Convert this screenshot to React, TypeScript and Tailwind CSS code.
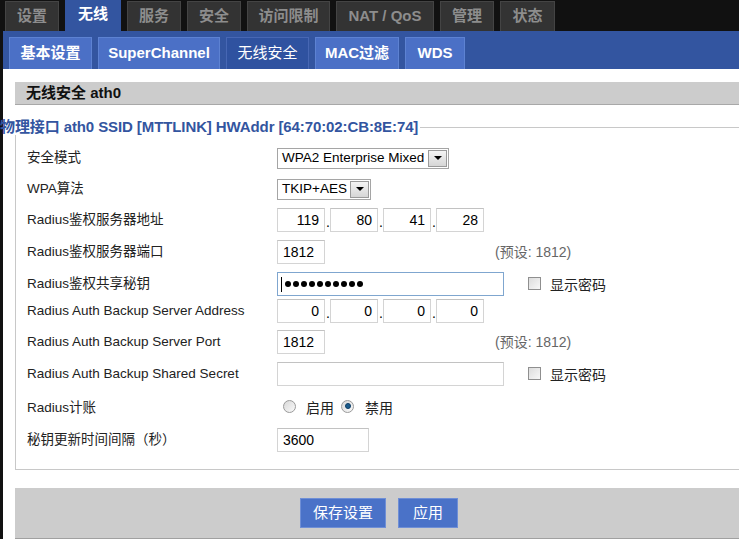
import React from "react";

const font = "font-['Liberation_Sans','Noto_Sans_CJK_SC',sans-serif]";

const topTabs = [
    { label: "设置", w: "w-[54px]" },
    { label: "无线", w: "w-[56px]", active: true },
    { label: "服务", w: "w-[54px]" },
    { label: "安全", w: "w-[54px]" },
    { label: "访问限制", w: "w-[83px]" },
    { label: "NAT / QoS", w: "w-[98px]" },
    { label: "管理", w: "w-[54px]" },
    { label: "状态", w: "w-[55px]" },
];

const subTabs = [
    { label: "基本设置", w: "w-[83px]" },
    { label: "SuperChannel", w: "w-[122px]" },
    { label: "无线安全", w: "w-[83px]", active: true },
    { label: "MAC过滤", w: "w-[84px]" },
    { label: "WDS", w: "w-[60px]" },
];

const Select = ({ value, w }: { value: string; w: string }) => (
    <div className={`${w} h-[21px] border border-[#a5a5a5] bg-white flex items-center justify-between pl-[4px] pr-[1px]`}>
        <span className="text-[13.5px] text-black leading-none whitespace-nowrap">{value}</span>
        <span className="shrink-0 w-[19px] h-[17px] border border-[#9a9a9a] bg-gradient-to-b from-[#f4f4f4] to-[#d6d6d6] flex items-center justify-center">
            <span className="w-0 h-0 border-l-[4px] border-r-[4px] border-t-[4px] border-l-transparent border-r-transparent border-t-black" />
        </span>
    </div>
);

const Input = ({ value = "", w = "w-[48px]", right = false }: { value?: string; w?: string; right?: boolean }) => (
    <div className={`${w} h-[24px] border border-[#d4d4d4] border-t-[#c2c2c2] bg-white flex items-center px-[5px] text-[14px] text-black ${right ? "justify-end" : ""}`}>
        {value}
    </div>
);

const IpInput = ({ parts }: { parts: string[] }) => (
    <div className="flex items-end">
        {parts.map((p, i) => (
            <React.Fragment key={i}>
                <Input value={p} right />
                {i < parts.length - 1 && <span className="w-[5px] text-[14px] leading-none pb-[3px] pl-[1px]">.</span>}
            </React.Fragment>
        ))}
    </div>
);

const Checkbox = () => (
    <span className="inline-block w-[13px] h-[13px] border border-[#8f8f8f] bg-gradient-to-br from-[#dcdcdc] to-[#f8f8f8]" />
);

const Radio = ({ checked }: { checked?: boolean }) => (
    <span className="inline-flex w-[13px] h-[13px] rounded-full border border-[#9a9a9a] bg-gradient-to-br from-[#d8d8d8] to-[#fafafa] items-center justify-center">
        {checked && <span className="w-[6px] h-[6px] rounded-full bg-[#1c5c8c] border border-[#0d3d66]" />}
    </span>
);

const Row = ({ label, h, children }: { label: string; h: string; children: React.ReactNode }) => (
    <div className={`flex items-center ${h}`}>
        <div className="w-[250px] text-[13.5px] text-[#222] -ml-[1px]">{label}</div>
        <div className="flex items-center">{children}</div>
    </div>
);

const Hint = () => <span className="ml-[170px] text-[14px] text-[#666]">(预设: 1812)</span>;

const ShowPwd = () => (
    <span className="ml-[24px] flex items-center gap-[9px] -mt-[1px]">
        <Checkbox />
        <span className="text-[14px] text-[#222] mt-[4px]">显示密码</span>
    </span>
);

export default function App() {
    return (
        <div className={`w-[739px] h-[539px] overflow-hidden bg-[#111] pl-[3px] ${font}`}>
            {/* top tabs */}
            <div className="h-[31px] flex items-end gap-[6px] pl-[5px] -ml-[3px] bg-[#111]">
                {topTabs.map((t) =>
                    t.active ? (
                        <div key={t.label} className={`${t.w} h-[31px] bg-[#3355a0] flex items-center justify-center text-white font-bold text-[15px] pb-[2px]`}>
                            {t.label}
                        </div>
                    ) : (
                        <div key={t.label} className={`${t.w} h-[30px] bg-[#333] border border-[#444] border-b-0 flex items-center justify-center text-[#8d8d8d] font-bold text-[15px]`}>
                            {t.label}
                        </div>
                    )
                )}
            </div>

            {/* sub tabs */}
            <div className="h-[38px] bg-[#3355a0] flex items-end gap-[6px] pl-[6px]">
                {subTabs.map((t) => (
                    <div
                        key={t.label}
                        className={`${t.w} h-[32px] flex items-center justify-center text-white text-[15px] border border-b-0 ${
                            t.active ? "bg-[#2f52a0] border-[#4767b4] font-normal" : "bg-[#4b70c6] border-[#5d82d2] font-bold"
                        }`}
                    >
                        {t.label}
                    </div>
                ))}
            </div>

            {/* content */}
            <div className="bg-white h-[470px] pt-[13px]">
                <div className="ml-[12px] h-[23px] bg-[#cccccc] border-b border-[#a8a8a8] flex items-center pl-[11px] text-[15px] font-bold text-[#111]">
                    无线安全 ath0
                </div>

                <div className="mt-[14px] -ml-[3px] flex items-center h-[16px]">
                    <span className="text-[15px] font-bold text-[#3355a0] whitespace-nowrap pr-[2px] tracking-[-0.1px]">
                        物理接口 ath0 SSID [MTTLINK] HWAddr [64:70:02:CB:8E:74]
                    </span>
                    <span className="flex-1 border-t border-[#c8c8c8]" />
                </div>

                <div className="ml-[12px] border-l border-b border-[#c8c8c8] pl-[12px] pt-[8px] pb-[18px]">
                    <Row label="安全模式" h="h-[30px]">
                        <Select value="WPA2 Enterprise Mixed" w="w-[172px]" />
                    </Row>
                    <Row label="WPA算法" h="h-[32px]">
                        <Select value="TKIP+AES" w="w-[94px]" />
                    </Row>
                    <Row label="Radius鉴权服务器地址" h="h-[30px]">
                        <IpInput parts={["119", "80", "41", "28"]} />
                    </Row>
                    <Row label="Radius鉴权服务器端口" h="h-[34px]">
                        <Input value="1812" />
                        <Hint />
                    </Row>
                    <Row label="Radius鉴权共享秘钥" h="h-[30px]">
                        <div className="w-[227px] h-[24px] border border-[#7fa6cf] bg-white flex items-center pl-[3px] gap-[2px]">
                            <span className="w-px h-[15px] bg-black mr-[1px]" />
                            {Array.from({ length: 10 }).map((_, i) => (
                                <span key={i} className="w-[6px] h-[6px] rounded-full bg-black" />
                            ))}
                        </div>
                        <ShowPwd />
                    </Row>
                    <Row label="Radius Auth Backup Server Address" h="h-[24px]">
                        <IpInput parts={["0", "0", "0", "0"]} />
                    </Row>
                    <Row label="Radius Auth Backup Server Port" h="h-[38px]">
                        <Input value="1812" />
                        <Hint />
                    </Row>
                    <Row label="Radius Auth Backup Shared Secret" h="h-[26px]">
                        <Input w="w-[227px]" />
                        <ShowPwd />
                    </Row>
                    <Row label="Radius计账" h="h-[42px]">
                        <span className="ml-[6px] flex items-center">
                            <span className="-mt-[4px] flex"><Radio /></span>
                            <span className="ml-[10px] text-[14px] text-[#222] mr-[7px]">启用</span>
                            <span className="-mt-[4px] flex"><Radio checked /></span>
                            <span className="ml-[11px] text-[14px] text-[#222]">禁用</span>
                        </span>
                    </Row>
                    <Row label="秘钥更新时间间隔（秒）" h="h-[22px]">
                        <Input value="3600" w="w-[92px]" />
                    </Row>
                </div>

                <div className="mt-[18px] ml-[12px] h-[52px] bg-[#cccccc] border-b-2 border-[#a0a0a0] flex items-center justify-center gap-[12px] pl-[4px]">
                    <button className="w-[86px] h-[30px] bg-[#4a72c8] border border-[#6f8fd6] text-white text-[15px]">保存设置</button>
                    <button className="w-[60px] h-[30px] bg-[#4a72c8] border border-[#6f8fd6] text-white text-[15px]">应用</button>
                </div>
            </div>
        </div>
    );
}
